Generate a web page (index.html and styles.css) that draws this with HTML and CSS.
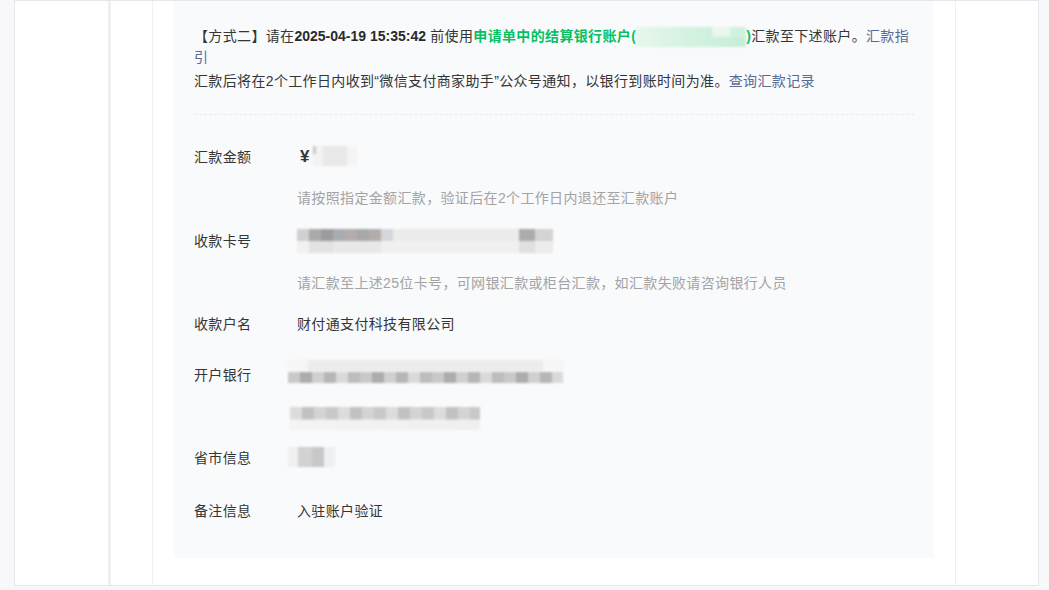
FILE: index.html
```html
<!DOCTYPE html>
<html lang="zh-CN">
<head>
	<meta charset="UTF-8">
	<title>汇款验证</title>
	<link rel="stylesheet" href="styles.css">
</head>
<body>
	<div class="frame">
		<div class="side"></div>
		<div class="gutter"></div>
		<div class="main">
			<div class="panel">
				<p class="notice">【方式二】请在<span class="date">2025-04-19 15:35:42</span> 前使用<span class="hl">申请单中的结算银行账户(<i class="mask mask-green"></i>)</span>汇款至下述账户。<a class="link">汇款指引</a></p>
				<p class="notice">汇款后将在2个工作日内收到“微信支付商家助手”公众号通知，以银行到账时间为准。<a class="link">查询汇款记录</a></p>
				<div class="divider"></div>

				<div class="row row-tip">
					<div class="label">汇款金额</div>
					<div class="value">
						<div class="amount"><b class="yen">¥</b><i class="mask mask-amount"></i></div>
						<div class="tip">请按照指定金额汇款，验证后在2个工作日内退还至汇款账户</div>
					</div>
				</div>
				<div class="row row-tip">
					<div class="label">收款卡号</div>
					<div class="value">
						<i class="mask mask-card"></i>
						<div class="tip">请汇款至上述25位卡号，可网银汇款或柜台汇款，如汇款失败请咨询银行人员</div>
					</div>
				</div>
				<div class="row">
					<div class="label">收款户名</div>
					<div class="value">财付通支付科技有限公司</div>
				</div>
				<div class="row row-bank">
					<div class="label">开户银行</div>
					<div class="value">
						<i class="mask mask-bank"></i>
						<i class="mask mask-branch"></i>
					</div>
				</div>
				<div class="row">
					<div class="label">省市信息</div>
					<div class="value">
						<i class="mask mask-city"></i>
					</div>
				</div>
				<div class="row row-last">
					<div class="label">备注信息</div>
					<div class="value">入驻账户验证</div>
				</div>
			</div>
		</div>
		<div class="aside"></div>
	</div>
</body>
</html>
```
FILE: styles.css
```css
*{
	margin: 0;
	padding: 0;
	box-sizing: border-box;
}
body{
	background-color: #f8f8fa;
	font-family: "Liberation Sans", "Noto Sans CJK SC", sans-serif;
	font-size: 14px;
	letter-spacing: 0.35px;
	color: #353535;
	overflow: hidden;
}
.frame{
	display: flex;
	width: 1025px;
	height: 586px;
	margin-left: 14px;
	background-color: #fff;
	border: 1px solid #e6e6ec;
}
.side{
	width: 96px;
	border-right: 3px solid #efefef;
}
.gutter{
	width: 42px;
	border-right: 1px solid #f0f0f0;
}
.main{
	width: 803px;
	padding: 0 21px;
	border-right: 1px solid #f0f0f2;
}
.aside{
	flex: 1;
}
.panel{
	height: 557px;
	padding: 25px 20px 0;
	background-color: #f9fafc;
}
.notice{
	line-height: 21px;
	color: #353535;
}
.notice + .notice{
	margin-top: 3px;
}
.date{
	font-weight: bold;
	letter-spacing: 0;
	color: #2a2a2a;
}
.hl{
	color: #07c160;
	font-weight: bold;
}
.link{
	color: #576b95;
	cursor: pointer;
}
.divider{
	margin: 22px 0 31px;
	border-top: 1px dashed #e8eaee;
}

/* 信息行 */
.row{
	display: flex;
	line-height: 22px;
	margin-bottom: 31px;
}
.row-tip{
	margin-bottom: 21px;
}
.row-tip + .row-tip{
	margin-bottom: 19px;
}
.row-bank{
	margin-bottom: 17px;
}
.row-last{
	margin-bottom: 0;
}
.label{
	width: 103px;
	flex: none;
	color: #353535;
}
.row-bank .label{
	margin-top: -2px;
}
.value{
	flex: 1;
}
.amount{
	height: 22px;
}
.yen{
	display: inline-block;
	margin-left: 3px;
	font-size: 17px;
	line-height: 22px;
	vertical-align: top;
}
.tip{
	margin-top: 19px;
	color: #a3a3a3;
}

/* 打码区域 */
.mask{
	display: inline-block;
	vertical-align: top;
	filter: blur(1px);
}
.mask-green{
	width: 110px;
	height: 20px;
	margin: 1px 0 0;
	vertical-align: top;
	background:
		linear-gradient(90deg, transparent 0 76px, #e9f7ef 76px 94px, #d2f1df 94px 110px) top/100% 50% no-repeat,
		linear-gradient(90deg, #e6f7ed 0, #d3f2e0 50%, #c6eed7 100%);
}
.mask-amount{
	width: 44px;
	height: 20px;
	margin-left: 3px;
	background:
		linear-gradient(90deg, #c8c8c8 0 3px, transparent 3px) top/100% 40% no-repeat,
		linear-gradient(90deg, #f3f3f3 0 10px, #e9e9e9 10px 34px, #f4f4f4 34px);
}
.mask-card{
	display: block;
	width: 256px;
	height: 24px;
	margin-top: -1px;
	background:
		linear-gradient(90deg, #d0d0d0 0 12px, #aaa 12px 24px, #9c9c9c 24px 36px, #a8abb0 36px 48px, #b4acaa 48px 60px, #a8a8a8 60px 72px, #b3adaa 72px 84px, #d3d7db 84px 96px, #ebebeb 96px 222px, #acacac 222px 238px, #d4d4d4 238px) top/100% 50% no-repeat,
		linear-gradient(90deg, #f1f1f1 0 12px, #e2e2e2 12px 36px, #e8e8e8 36px 84px, #f0f0f0 84px 222px, #e0e0e0 222px 238px, #ececec 238px) bottom/100% 50% no-repeat;
}
.mask-bank{
	display: block;
	width: 275px;
	height: 23px;
	margin: -6px 0 0 -9px;
	background:
		linear-gradient(90deg, #f6f6f6 0 20px, #ececec 20px 255px, #f6f6f6 255px) top/100% 50% no-repeat,
		repeating-linear-gradient(90deg, #c9c9c9 0 12px, #acacac 12px 24px, #d0d0d0 24px 36px, #b6b6b6 36px 48px, #dadada 48px 60px, #bdbdbd 60px 72px) bottom/100% 50% no-repeat;
}
.mask-branch{
	display: block;
	width: 190px;
	height: 23px;
	margin: 24px 0 0 -7px;
	background:
		repeating-linear-gradient(90deg, #dcdcdc 0 12px, #c2c2c2 12px 24px, #d4d4d4 24px 36px, #c8c8c8 36px 48px) top/100% 55% no-repeat,
		linear-gradient(90deg, #f4f4f4, #efefef) bottom/100% 45% no-repeat;
}
.mask-city{
	display: block;
	width: 47px;
	height: 20px;
	margin-left: -9px;
	background:
		linear-gradient(90deg, #f0f0f0 0 10px, #d2d2d2 10px 24px, #c8c8c8 24px 36px, #eef0f3 36px);
}
```
